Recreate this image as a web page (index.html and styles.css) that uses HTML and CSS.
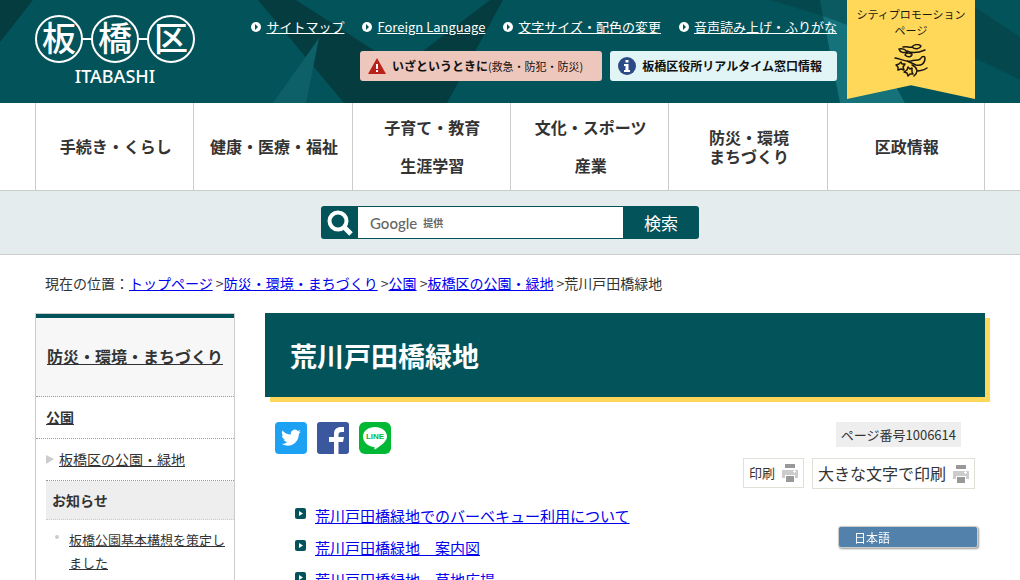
FILE: index.html
```html
<!DOCTYPE html>
<html lang="ja">
<head>
<meta charset="utf-8">
<title>荒川戸田橋緑地</title>
<link rel="stylesheet" href="styles.css">
</head>
<body>
<header class="header">
  <svg class="header-art" viewBox="0 0 1020 103" preserveAspectRatio="none" aria-hidden="true">
    <path fill="#053c40" d="M0 0H33L0 42ZM258 0H296L375 51H423L490 0H503L447 103H344Z"/>
    <path fill="#04484e" d="M770 0H820L823 16ZM975 7L1020 37V80L975 58Z"/>
    <path fill="#0d6067" d="M319 38L306 103H273Z"/>
    <path fill="#0b5a61" d="M820 0H850V28L823 16Z"/>
    <path fill="#15727a" d="M823 16L850 26L895 85L905 103H840Z"/>
  </svg>
  <a class="logo" href="#" aria-label="板橋区 ITABASHI">
    <svg width="160" height="72" viewBox="0 0 160 72">
      <g fill="none" stroke="#fff" stroke-width="2">
        <circle cx="24" cy="25" r="23"/><circle cx="80" cy="25" r="23"/><circle cx="136" cy="25" r="23"/>
        <path d="M47 25H57M103 25H113"/>
      </g>
      <g class="logo-kanji"><text x="24" y="37">板</text><text x="80" y="37">橋</text><text x="136" y="37">区</text></g>
      <text class="logo-roman" x="80" y="69">ITABASHI</text>
    </svg>
  </a>
  <div class="header-tools">
    <ul class="utility">
      <li><svg class="dot" viewBox="0 0 10 10"><circle cx="5" cy="5" r="5" fill="#fff"/><path d="M4 2L7 5L4 8Z" fill="#03535a"/></svg><a href="#">サイトマップ</a></li>
      <li><svg class="dot" viewBox="0 0 10 10"><circle cx="5" cy="5" r="5" fill="#fff"/><path d="M4 2L7 5L4 8Z" fill="#03535a"/></svg><a href="#">Foreign Language</a></li>
      <li><svg class="dot" viewBox="0 0 10 10"><circle cx="5" cy="5" r="5" fill="#fff"/><path d="M4 2L7 5L4 8Z" fill="#03535a"/></svg><a href="#">文字サイズ・配色の変更</a></li>
      <li><svg class="dot" viewBox="0 0 10 10"><circle cx="5" cy="5" r="5" fill="#fff"/><path d="M4 2L7 5L4 8Z" fill="#03535a"/></svg><a href="#">音声読み上げ・ふりがな</a></li>
    </ul>
    <div class="quick">
      <a class="quick-link alert" href="#">
        <svg width="18" height="16" viewBox="0 0 18 16"><path d="M9 0L18 16H0Z" fill="#b9221c"/><path d="M8 6H10V11H8ZM8 12H10V14H8Z" fill="#fff"/></svg>
        <span><b>いざというときに</b><small>(救急・防犯・防災)</small></span>
      </a>
      <a class="quick-link info" href="#">
        <svg width="18" height="18" viewBox="0 0 18 18"><circle cx="9" cy="9" r="9" fill="#2c4a86"/><path d="M7.500 3H10.500V5.500H7.500ZM6 7H10.500V13H12V15H6V13H7.500V9H6Z" fill="#fff"/></svg>
        <b>板橋区役所リアルタイム窓口情報</b>
      </a>
    </div>
  </div>
  <a class="ribbon" href="#">
    <span>シティプロモーション<br>ページ</span>
    <svg width="34" height="34" viewBox="0 0 34 34" fill="none" stroke="#1c1712" stroke-width="1.500" stroke-linecap="round" stroke-linejoin="round">
      <path d="M9 3C13 2 15 4 18 3C20 0 25 0 27 2C26 5 21 6 18 3"/>
      <path d="M13 7C17 9 24 9 31 6"/>
      <path d="M5 5C9 4 12 6 13 8C10 9 6 9 5 5ZM11 11C12 8 16 9 18 10C18 13 14 14 11 11Z"/>
      <path d="M1 14C7 15 12 18 17 17C21 15 25 18 27 14C28 12 31 12 31 14C31 20 27 22 22 21L13 17"/>
      <path d="M7 18L8 20L11 20L9 23L10 26L7 25L4 26L4 23L2 21L5 20Z"/>
      <path d="M14 23L16 25L18 24L18 28L19 30L16 30L14 32L13 29L10 28L13 26Z"/>
      <path d="M18 21C23 23 25 28 20 32M24 27C27 26 29 27 33 24"/>
    </svg>
  </a>
</header>
<nav class="global-nav">
  <a href="#">手続き・くらし</a>
  <a href="#">健康・医療・福祉</a>
  <a href="#">子育て・教育<br><br>生涯学習</a>
  <a href="#">文化・スポーツ<br><br>産業</a>
  <a href="#">防災・環境<br>まちづくり</a>
  <a href="#">区政情報</a>
</nav>
<div class="search-band">
  <form class="search">
    <svg class="search-icon" viewBox="0 0 37 31" fill="none" stroke="#fff" aria-hidden="true"><circle cx="17" cy="14" r="8.500" stroke-width="4"/><path d="M23 20L30 27" stroke-width="5"/></svg>
    <div class="search-field">
      <input id="q" type="text" aria-label="サイト内検索">
      <label for="q"><span class="google">Google</span><span class="offer">提供</span></label>
    </div>
    <button type="button">検索</button>
  </form>
</div>
<div class="breadcrumb">現在の位置：<a href="#">トップページ</a> &gt;<a href="#">防災・環境・まちづくり</a> &gt;<a href="#">公園</a> &gt;<a href="#">板橋区の公園・緑地</a> &gt;荒川戸田橋緑地</div>
<div class="page">
  <aside class="side">
    <h2><a href="#">防災・環境・まちづくり</a></h2>
    <h3><a href="#">公園</a></h3>
    <p class="side-parent"><svg width="8" height="9" viewBox="0 0 8 9"><path d="M0 0L8 4L0 9Z" fill="#ccc"/></svg><a href="#">板橋区の公園・緑地</a></p>
    <h4>お知らせ</h4>
    <ul class="side-list"><li><a href="#">板橋公園基本構想を策定しました</a></li></ul>
  </aside>
  <main class="main">
    <h1>荒川戸田橋緑地</h1>
    <div class="meta">
      <div class="share">
        <a href="#" aria-label="Twitter"><svg viewBox="0 0 32 32"><rect width="32" height="32" rx="4" fill="#1da1f2"/><g transform="translate(6.200 5.800) scale(.82)"><path fill="#fff" d="M23.950 4.570a10 10 0 0 1-2.820.780 4.960 4.960 0 0 0 2.160-2.730c-.95.550-2 .96-3.130 1.190a4.920 4.920 0 0 0-8.380 4.480C7.690 8.090 4.070 6.130 1.640 3.160a4.930 4.930 0 0 0 1.520 6.570 4.900 4.900 0 0 1-2.230-.61v.06a4.920 4.920 0 0 0 3.950 4.830 5 5 0 0 1-2.210.08 4.940 4.940 0 0 0 4.600 3.420A9.870 9.870 0 0 1 0 19.540a14 14 0 0 0 7.550 2.210c9.050 0 14-7.500 14-13.980l-.02-.64a9.940 9.940 0 0 0 2.420-2.560z"/></g></svg></a>
        <a href="#" aria-label="Facebook"><svg viewBox="0 0 32 32"><rect width="32" height="32" rx="3" fill="#3b579d"/><path fill="#fff" d="M17 32V20H12V15H17V12C17 7 20 5 24 5H27V10H25C22 10 21.500 11 21.500 13V15H27L26 20H21.500V32Z"/></svg></a>
        <a href="#" aria-label="LINE"><svg viewBox="0 0 32 32"><rect width="32" height="32" rx="6" fill="#00b833"/><path fill="#fff" d="M16 5C22.500 5 28 9 28 14.500C28 20 21 24 16 27.500C15 28 15.500 26 15.500 25C9 24.500 4 20 4 14.500C4 9 9.500 5 16 5Z"/><text class="line-text" x="16" y="17">LINE</text></svg></a>
      </div>
      <div class="tools">
        <span class="page-no">ページ番号1006614</span>
        <div class="print">
          <button type="button">印刷<svg width="16" height="18" viewBox="0 0 16 18"><path fill="#999" d="M3 0H13V4H3Z"/><path fill="#ccc" d="M0 6H16V14H13V11H3V14H0Z"/><path fill="#999" d="M4 12H12V18H4Z"/><path fill="#fff" d="M12 6H13V7H14V8H13V9H12V8H11V7H12Z"/></svg></button>
          <button type="button" class="large">大きな文字で印刷<svg width="16" height="18" viewBox="0 0 16 18"><path fill="#999" d="M3 0H13V4H3Z"/><path fill="#ccc" d="M0 6H16V14H13V11H3V14H0Z"/><path fill="#999" d="M4 12H12V18H4Z"/><path fill="#fff" d="M12 6H13V7H14V8H13V9H12V8H11V7H12Z"/></svg></button>
        </div>
      </div>
    </div>
    <ul class="links">
      <li><svg viewBox="0 0 11 11"><rect width="11" height="11" rx="2" fill="#03535a"/><path d="M4 3L8 5.500L4 8Z" fill="#fff"/></svg><a href="#">荒川戸田橋緑地でのバーベキュー利用について</a></li>
      <li><svg viewBox="0 0 11 11"><rect width="11" height="11" rx="2" fill="#03535a"/><path d="M4 3L8 5.500L4 8Z" fill="#fff"/></svg><a href="#">荒川戸田橋緑地　案内図</a></li>
      <li><svg viewBox="0 0 11 11"><rect width="11" height="11" rx="2" fill="#03535a"/><path d="M4 3L8 5.500L4 8Z" fill="#fff"/></svg><a href="#">荒川戸田橋緑地　草地広場</a></li>
    </ul>
  </main>
</div>
<select class="language" aria-label="言語"><option>日本語</option></select>
</body>
</html>
```
FILE: styles.css
```css
* { box-sizing: border-box; }
body {
  margin: 0;
  color: #333;
  background: #fff;
  font-family: "Noto Sans CJK JP", sans-serif;
  font-size: 14px;
  overflow-x: hidden;
}
ul, h1, h2, h3, h4, p { margin: 0; padding: 0; }
ul { list-style: none; }
svg { display: block; flex: none; }
button, input, select { font-family: inherit; margin: 0; }

.header {
  position: relative;
  display: flex;
  min-height: 103px;
  padding: 0 45px 0 35px;
  background: #03535a;
}
.header-art { position: absolute; inset: 0; width: 100%; height: 100%; }
.logo { position: relative; padding-top: 14px; }
.logo svg { overflow: visible; }
.logo text { fill: #fff; text-anchor: middle; }
.logo-kanji { font-size: 34px; font-weight: 500; }
.logo-roman { font-family: "Noto Sans", sans-serif; font-size: 18px; font-weight: 500; }
.header-tools {
  position: relative;
  display: flex;
  flex-direction: column;
  align-items: flex-end;
  gap: 14px;
  margin-left: auto;
  padding-top: 17px;
}
.utility { display: flex; gap: 18px; font-size: 13px; line-height: 20px; white-space: nowrap; }
.utility li { display: flex; align-items: center; gap: 5px; }
.utility a { color: #fff; }
.dot { width: 10px; height: 10px; }
.quick { display: flex; gap: 8px; }
.quick-link {
  display: flex;
  align-items: center;
  gap: 6px;
  height: 30px;
  padding: 0 15px 0 8px;
  border-radius: 3px;
  color: #111;
  font-size: 12px;
  line-height: 18px;
  white-space: nowrap;
  text-decoration: none;
}
.quick-link small { font-size: 11px; }
.alert { padding-right: 19px; background: #edc6bc; }
.info { background: #e2f5f6; }
.ribbon {
  position: relative;
  display: flex;
  flex-direction: column;
  align-items: center;
  gap: 6px;
  width: 128px;
  height: 99px;
  margin-left: 10px;
  padding-top: 6px;
  background: #ffd85a;
  clip-path: polygon(0 0, 100% 0, 100% 100%, 50% 86%, 0 100%);
  color: #1c1712;
  font-size: 11px;
  line-height: 16px;
  text-align: center;
  text-decoration: none;
}

.global-nav {
  display: grid;
  grid-template-columns: repeat(6, 1fr);
  min-height: 88px;
  padding: 0 35px;
  border-bottom: 1px solid #ccc;
}
.global-nav a {
  display: grid;
  place-content: center;
  padding-left: 2px;
  border-left: 1px solid #ccc;
  color: #333;
  font-size: 16px;
  font-weight: bold;
  line-height: 19px;
  text-align: center;
  text-decoration: none;
}
.global-nav a:last-child { border-right: 1px solid #ccc; }

.search-band {
  display: flex;
  justify-content: center;
  padding: 15px;
  border-bottom: 1px solid #ccc;
  background: #e4ecee;
}
.search {
  display: flex;
  width: 378px;
  height: 33px;
  padding: 1px 0;
  border-radius: 3px;
  background: #03535a;
}
.search-icon { width: 37px; height: 31px; }
.search-field { position: relative; flex: 1; }
.search-field input { width: 100%; height: 31px; border: 0; padding: 0 12px; background: #fff; }
.search-field label {
  position: absolute;
  inset: 0 auto 0 12px;
  display: flex;
  align-items: center;
  gap: 6px;
  color: #666;
}
.google { font-family: Lato, sans-serif; font-size: 15px; font-weight: 500; }
.offer { font-size: 10px; font-weight: bold; }
.search button {
  width: 76px;
  padding: 0;
  border: 0;
  background: none;
  color: #fff;
  font-size: 17px;
}

.breadcrumb { padding: 17px 45px 18px; line-height: 23px; }
.breadcrumb a, .links a { color: #00e; }

.page { display: flex; align-items: flex-start; gap: 30px; padding: 0 35px; }
.side { width: 200px; flex: none; border: 1px solid #ccc; }
.side a { color: #333; }
.side h2 {
  padding: 26px 0 28px;
  border-top: 4px solid #03535a;
  border-bottom: 1px dotted #999;
  background: #f7f7f7;
  font-size: 16px;
  line-height: 24px;
  text-align: center;
}
.side h3 {
  padding: 9px 10px;
  border-bottom: 1px dotted #999;
  font-size: 14px;
  line-height: 23px;
}
.side-parent {
  display: flex;
  align-items: center;
  gap: 5px;
  margin-left: 10px;
  padding: 9px 0;
  border-bottom: 1px dotted #999;
  line-height: 23px;
}
.side h4 {
  margin-left: 10px;
  padding: 8px 6px 7px;
  border-bottom: 1px dotted #ccc;
  background: #eee;
  font-size: 14px;
  line-height: 23px;
}
.side-list { padding: 8px 0 30px 19px; font-size: 13px; line-height: 23px; }
.side-list li { position: relative; padding-left: 14px; }
.side-list li::before {
  content: "";
  position: absolute;
  left: 0;
  top: 7px;
  width: 4px;
  height: 4px;
  border-radius: 50%;
  background: #ccc;
}

.main { flex: 1; }
.main h1 {
  padding: 26px 25px 24px;
  background: #03535a;
  box-shadow: 5px 5px #ffd85a;
  color: #fff;
  font-size: 27px;
  line-height: 34px;
}
.meta { display: flex; justify-content: space-between; padding: 25px 10px 0; }
.share { display: flex; gap: 10px; }
.share svg { width: 32px; height: 32px; }
.line-text { fill: #00b833; font-family: "Liberation Sans", sans-serif; font-size: 8px; font-weight: bold; text-anchor: middle; }
.tools { display: flex; flex-direction: column; align-items: flex-end; gap: 11px; }
.page-no { margin-right: 14px; padding: 0 5px; background: #eee; font-size: 13px; line-height: 25px; }
.print { display: flex; align-items: flex-start; gap: 8px; }
.print button {
  display: flex;
  align-items: center;
  gap: 7px;
  padding: 0 5px;
  border: 1px solid #e0e0d8;
  background: #fff;
  color: #333;
  font-size: 13px;
  line-height: 28px;
}
.print .large { font-size: 16px; line-height: 29px; }
.links { padding: 15px 30px; font-size: 15px; line-height: 24px; }
.links li { display: flex; align-items: flex-start; gap: 9px; padding-bottom: 8px; }
.links svg { width: 11px; height: 11px; margin-top: 4px; }

.language {
  position: fixed;
  right: 42px;
  bottom: 32px;
  width: 140px;
  height: 22px;
  padding: 0 15px;
  appearance: none;
  border: 1px solid #ccc;
  border-radius: 3px;
  background: #5281ab;
  box-shadow: 1px 1px 2px #999;
  color: #fff;
  font-size: 12px;
}
```
